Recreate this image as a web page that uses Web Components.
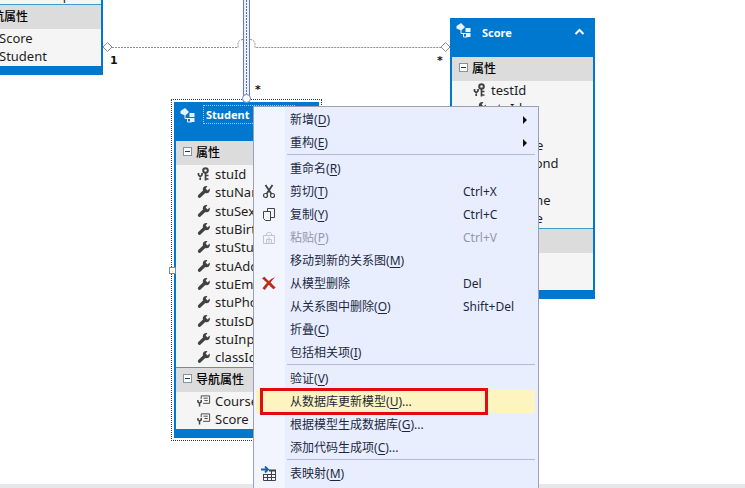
<!DOCTYPE html>
<html lang="zh-CN">
<head>
<meta charset="utf-8">
<title>实体关系图</title>
<style>
html,body{margin:0;height:100%;overflow:hidden;background:#fff}
body{font:12px/18px "Noto Sans","Noto Sans CJK SC",sans-serif;color:#1e1e1e}
</style>
</head>
<body>
<model-canvas>
  <model-links></model-links>
  <model-entity name="Course" style="left:-42px;top:-78px">
    <model-section label="属性"><model-field icon="wrench">createTemp</model-field></model-section>
    <model-section label="导航属性"><model-field icon="nav">Score</model-field><model-field icon="nav">Student</model-field></model-section>
  </model-entity>
  <model-entity name="Student" selected style="left:174px;top:102px">
    <model-section label="属性" spread>
      <model-field icon="key">stuId</model-field><model-field icon="wrench">stuName</model-field><model-field icon="wrench">stuSex</model-field><model-field icon="wrench">stuBirth</model-field><model-field icon="wrench">stuStudy</model-field><model-field icon="wrench">stuAddress</model-field><model-field icon="wrench">stuEmail</model-field><model-field icon="wrench">stuPhone</model-field><model-field icon="wrench">stuIsDel</model-field><model-field icon="wrench">stuInput</model-field><model-field icon="wrench">classId</model-field>
    </model-section>
    <model-section label="导航属性"><model-field icon="nav">Course</model-field><model-field icon="nav">Score</model-field></model-section>
  </model-entity>
  <model-entity name="Score" style="left:450px;top:18px">
    <model-section label="属性" spread>
      <model-field icon="key">testId</model-field><model-field icon="wrench">stuId</model-field><model-field icon="wrench">score</model-field><model-field icon="wrench">testBase</model-field><model-field icon="wrench">testSecond</model-field><model-field icon="wrench">isDel</model-field><model-field icon="wrench">testName</model-field><model-field icon="wrench">testDate</model-field>
    </model-section>
    <model-section label="导航属性"><model-field icon="nav">Class</model-field><model-field icon="nav">Stu</model-field></model-section>
  </model-entity>
  <context-menu>
    <menu-item key="D" submenu>新增</menu-item>
    <menu-item key="E" submenu>重构</menu-item>
    <menu-line></menu-line>
    <menu-item key="R">重命名</menu-item>
    <menu-item key="T" icon="cut" shortcut="Ctrl+X">剪切</menu-item>
    <menu-item key="Y" icon="copy" shortcut="Ctrl+C">复制</menu-item>
    <menu-item key="P" icon="paste" shortcut="Ctrl+V" disabled>粘贴</menu-item>
    <menu-item key="M">移动到新的关系图</menu-item>
    <menu-item icon="delete" shortcut="Del">从模型删除</menu-item>
    <menu-item key="O" shortcut="Shift+Del">从关系图中删除</menu-item>
    <menu-item key="C">折叠</menu-item>
    <menu-item key="I">包括相关项</menu-item>
    <menu-line></menu-line>
    <menu-item key="V">验证</menu-item>
    <menu-item key="U" more active>从数据库更新模型</menu-item>
    <menu-item key="G" more>根据模型生成数据库</menu-item>
    <menu-item key="C" more>添加代码生成项</menu-item>
    <menu-line></menu-line>
    <menu-item key="M" icon="table">表映射</menu-item>
  </context-menu>
</model-canvas>
<script>
const icons={
wrench:'<svg width="14" height="14" viewBox="0 0 14 14"><path d="M12.6 3.6 10.5 5.4 8.7 3.6 10.4 1.3C8.5.7 6.6 1.5 6 3.2c-.3.8-.2 1.5 0 2.2L1.3 10a1.6 1.6 0 0 0 2.5 2.3L8.3 8c1.2.5 2.6.2 3.5-.6 1.1-1 1.3-2.5.8-3.8Z" fill="#424242"/></svg>',
key:'<svg width="14" height="14" viewBox="0 0 14 14" fill="none" stroke="#424242"><circle cx="8.500" cy="3.500" r="2.300" stroke-width="2"/><path d="M8.500 5.500V13.500M8.500 8.500h3M8.500 12h3M1.500 6v2l1.700 1.700L5 8V6M3.200 9.500V13" stroke-width="1.700"/></svg>',
nav:'<svg width="15" height="14" viewBox="0 0 15 14" fill="none" stroke="#424242"><path d="M4.500 5V1.500h9v8H6.500M7 4h4.500M8 6.500h3.500"/><path d="M1 6v2l1.700 1.500L4.500 8V6M2.700 9.500V13" stroke-width="1.600"/></svg>',
cut:'<svg width="14" height="15" viewBox="0 0 14 15" fill="none" stroke="#424242"><path d="m3.500 1 6 9M10.500 1l-6 9" stroke-width="1.800"/><circle cx="3.500" cy="11.500" r="2" stroke-width="1.200"/><circle cx="10.500" cy="11.500" r="2" stroke-width="1.200"/></svg>',
copy:'<svg width="14" height="15" viewBox="0 0 14 15" fill="none" stroke="#424242"><path d="M5.500 4V1.500h7v9h-4M1.500 4.500h7v9h-5l-2-2Z"/></svg>',
paste:'<svg width="14" height="14" viewBox="0 0 14 14" fill="none" stroke="#c1c4d0"><path d="M1.500 4.500h11v8h-11ZM4.500 4V2.500l2-1h2l1 1V4M4.500 12V8.500h5V12M7 6v6"/></svg>',
delete:'<svg width="16" height="15" viewBox="0 0 16 15"><path d="M1 2.300 3.500 .8c1.300 1.700 2.700 3.200 4.200 4.200C9.400 3.400 11.500 2 14.200 1.200 12.200 3 10.600 4.800 9.600 6.500c1.600 1.700 3.200 3.200 5 5l-2 1.800c-1.900-1.300-3.300-2.900-4.800-4.500-1.300 1.800-2.600 3.300-4 5.200L1.400 12.300C3 10.300 4.300 8.500 6 6.800 4.200 5.300 2.500 4 1 2.300Z" fill="#b92d1c"/></svg>',
table:'<svg width="16" height="16" viewBox="0 0 16 16" fill="none"><path d="M8 4.500h6.500v10h-12V8M2.500 8.500h12M2.500 11.500h12M6.500 8v6.500M10.500 5v9.500" stroke="#424242"/><path d="M8 3.500h7v2H8Z" fill="#424242"/><path d="M0 3.500h7M4 .5l3 3-3 3" stroke="#1764a5" stroke-width="1.800"/></svg>',
entity:'<svg width="16" height="16" viewBox="0 0 16 16" fill="#e8f4fc"><path d="M5 0 9 4 6.500 6.500 5 7.500 0.500 5.500V3ZM9.500 5h5v4h-5ZM10 10h4.500v4H10Z"/><path d="M5 6v4.500h5M7.500 10v4h4" fill="none" stroke="#e8f4fc"/></svg>'
};
const define=(tag,render)=>customElements.define(tag,class extends HTMLElement{
  connectedCallback(){
    if(this.shadowRoot)return;
    this.attachShadow({mode:'open'}).innerHTML=render(this);
  }
});
define('model-canvas',()=>`<style>
:host{display:block;position:relative;min-height:100vh;overflow:hidden}
.edge{position:absolute;left:0;right:0;bottom:0;height:4px;background:#e6e7eb}
</style><div class="edge"></div><slot></slot>`);
define('model-links',()=>`<style>
:host{display:block;position:absolute;inset:0}
svg{width:100%;height:100%;display:block}
text{font:bold 11px "DejaVu Sans",sans-serif;fill:#111}
</style><svg fill="none" stroke="#8d8d8d">
<path d="M112 47.500h126v-4q1-4 5-4h7q4 0 5 4v4h186" stroke-dasharray="2 1"/>
<path d="M243 0h7v98h-7Z" fill="#edf1ff" stroke="none"/>
<path d="M243.500 0v98M249.500 0v98" stroke="#5f78e0"/><path d="M246.500 0v94" stroke="#5a6e96" stroke-dasharray="2 1"/>
<path d="m107.500 42.500 4.500 4.500-4.500 4.500L103 47ZM445.500 42.500l4.500 4.500-4.500 4.500L441 47Z" fill="#fff"/>
<g stroke="none"><text x="110" y="64">1</text><text x="437" y="64">*</text><text x="255" y="93">*</text></g></svg>`);
define('model-entity',h=>{const s=h.hasAttribute('selected');return `<style>
:host{position:absolute;display:flex;flex-direction:column;box-sizing:border-box;width:145px;border:solid #0078cf;border-width:0 2px 9px;background:#f5f5f5}
header{display:flex;align-items:flex-start;height:39px;box-sizing:border-box;background:#0078cf;color:#fff;padding:5px 4px 0}
svg{flex:none;display:block}
b{flex:1;margin-left:7px;padding:0 2px;font:bold 11px/17px "Noto Sans",sans-serif;border:1px dotted transparent}
:host([selected]) b{border-color:#9fcff0}
:host([selected]) header{padding:3px 22px 0 4px}
:host([selected]) header>svg{margin-top:3px}
button{all:unset;display:flex;padding:5px 4px}
.frame{position:absolute;inset:-3px -5px -12px;border:1px dotted #333}
.grip{position:absolute;left:-7px;top:165px;width:5px;height:5px;border:1px solid #858585;background:#fff}
.end{position:absolute;left:66px;top:-8px;width:7px;height:7px;border:1px solid #7180bd;border-radius:50%;background:#fff}
</style><header>${icons.entity}<b>${h.getAttribute('name')}</b>${s?'':'<button aria-label="折叠"><svg width="11" height="8" viewBox="0 0 11 8"><path d="m1.500 6 4-4 4 4" fill="none" stroke="#fff" stroke-width="2"/></svg></button>'}</header><slot></slot>${s?'<i class="frame"></i><i class="grip"></i><i class="end"></i>':''}`});
define('model-section',h=>`<style>
:host{display:block}
h2{margin:0;display:flex;align-items:center;height:24px;box-sizing:border-box;background:#dcdcdc;color:#000;font-size:12px;font-weight:500;gap:4px;padding-left:7px}
:host(:not([spread])) h2{height:25px;border-top:1px solid #4499d2}
button{all:unset;width:7px;height:7px;border:1px solid #7d93ae;background:#fff;display:flex;align-items:center;justify-content:center;margin-bottom:3px}
button::before{content:"";width:5px;height:1px;background:#333}
::slotted(model-field:nth-child(3n+2)){padding-bottom:1px}
</style><h2><button aria-label="折叠"></button><span>${h.getAttribute('label')}</span></h2><div><slot></slot></div>`);
define('model-field',h=>`<style>
:host{display:flex;align-items:center;gap:4px;padding-left:21px;white-space:nowrap;color:#1e1e1e;font-size:13px;line-height:18px}
i{display:flex;width:14px;justify-content:flex-end}
</style><i>${icons[h.getAttribute('icon')]}</i><span><slot></slot></span>`);
define('context-menu',()=>`<style>
:host{position:absolute;left:253px;top:106px;width:286px;box-sizing:border-box;border:1px solid #9b9fb9;padding:1px 3px 3px 2px;display:block;background:linear-gradient(90deg,#f2f4fe 31px,#e9eeff 31px);color:#1b293e}
.mark{position:absolute;left:6px;top:281px;width:222px;height:21px;border:3px solid #e30b13;pointer-events:none}
</style><div role="menu"><slot></slot></div><div class="mark"></div>`);
define('menu-line',()=>`<style>:host{display:block;height:1px;margin:0 0 2px 31px;background:#b6bad0}</style>`);
define('menu-item',h=>{const k=h.getAttribute('key'),i=h.getAttribute('icon');return `<style>
:host{display:block}
button{all:unset;box-sizing:border-box;width:100%;height:23px;display:grid;grid-template-columns:25px 164px 1fr 12px;column-gap:9px;align-items:center;white-space:nowrap;line-height:18px}
:host([active]) button{background:#fdf4bf}
:host([disabled]) button{color:#9298a7}
i{display:flex;justify-content:center}
u{text-underline-offset:2px}
.arrow{width:0;border:solid transparent;border-width:4px 0 4px 4px;border-left-color:#111}
</style><button role="menuitem" ${h.hasAttribute('disabled')?'disabled':''}><i>${i?icons[i]:''}</i><span><slot></slot>${k?`(<u>${k}</u>)`:''}${h.hasAttribute('more')?'...':''}</span><span>${h.getAttribute('shortcut')||''}</span>${h.hasAttribute('submenu')?'<span class="arrow"></span>':''}</button>`});
</script>
</body>
</html>
